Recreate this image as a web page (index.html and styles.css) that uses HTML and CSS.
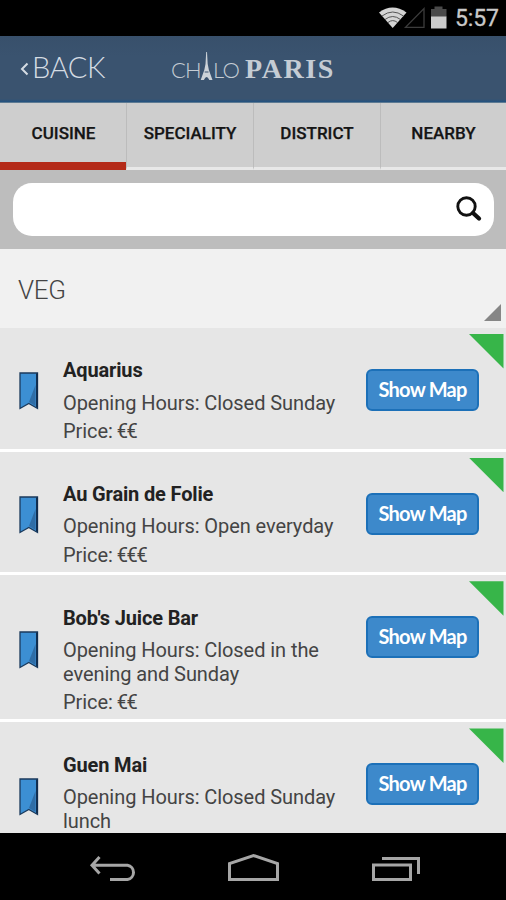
FILE: index.html
```
<!DOCTYPE html>
<html lang="en">
<head>
<meta charset="utf-8">
<title>Chalo Paris</title>
<link rel="stylesheet" href="styles.css">
</head>
<body>
<svg width="0" height="0" class="defs">
  <symbol id="bookmark" viewBox="0 0 20 38">
    <path d="M1 1h17.500v35.500L9.800 31.500 1 36.500z" fill="#3c8fd3"/>
    <path d="M16.500 13v21L10 30z" fill="#2f6da6"/>
    <path d="M1 1h17.500v35.500L9.800 31.500 1 36.500z" fill="none" stroke="#1b3a5c" stroke-width="1.300"/>
    <path d="M17.900 1.500v34" stroke="#0d2747" stroke-width="1.600"/>
  </symbol>
</svg>
<div class="screen">
  <div class="status">
    <svg class="status-icons" width="70" height="24" viewBox="378 5 70 24">
      <path d="M379 12.500Q392.500 2.500 406.500 12.500L392.700 28z" fill="#d4d4d4"/>
      <path d="M382 16q10.700-8 21.500 0M385 19.500q7.700-6 15.500 0M388 22.500q4.700-3.800 9.500 0" fill="none" stroke="#555" stroke-width="1"/>
      <path d="M405.500 27.300h18.500V8.500z" fill="none" stroke="#3c3c3c" stroke-width="1.300"/>
      <path d="M431 17V9h3.500V6.500h8V9h4v8z" fill="#4a4a4a"/>
      <path d="M431 16.500h15.500v12H431z" fill="#cbcbcb"/>
    </svg>
    <span class="clock">5:57</span>
  </div>
  <header class="bar">
    <div class="back"><svg width="9" height="14" viewBox="0 0 9 14"><path d="M7.500 1.500L2 7l5.500 5.500" fill="none" stroke="#d5dce3" stroke-width="2"/></svg><span>BACK</span></div>
    <div class="logo">
      <span class="thin">CH</span>
      <svg class="tower" width="13" height="29" viewBox="0 0 13 29"><path d="M6.200 0h.8l.7 12 1.200 6 3.600 10H9.300q-2.700-6-5.400 0H.700l3.600-10 1.200-6z" fill="#ccd2d8"/><path d="M4.700 20h3.800" stroke="#3a526e"/></svg>
      <span class="thin lo">LO</span>
      <span class="paris">PARIS</span>
    </div>
  </header>
  <nav class="tabs">
    <div class="tab active">CUISINE</div>
    <div class="tab">SPECIALITY</div>
    <div class="tab">DISTRICT</div>
    <div class="tab">NEARBY</div>
  </nav>
  <div class="search">
    <div class="field"><svg width="27" height="27" viewBox="0 0 27 27"><circle cx="10.500" cy="10.500" r="8.700" fill="none" stroke="#111" stroke-width="2.900"/><path d="M17 17l6 5.500" stroke="#111" stroke-width="4.300" stroke-linecap="round"/></svg></div>
  </div>
  <div class="category"><span>VEG</span><svg width="17" height="17" viewBox="0 0 17 17"><path d="M17 0v17H0z" fill="#868686"/></svg></div>
  <main class="list">
    <article class="row">
      <svg class="mark" width="20" height="38"><use href="#bookmark"/></svg>
      <div class="info"><h2>Aquarius</h2><p class="hours">Opening Hours: Closed Sunday</p><p>Price: <span class="euro">€€</span></p></div>
      <div class="map">Show Map</div><i class="corner"></i>
    </article>
    <article class="row">
      <svg class="mark" width="20" height="38"><use href="#bookmark"/></svg>
      <div class="info"><h2>Au Grain de Folie</h2><p class="hours">Opening Hours: Open everyday</p><p>Price: <span class="euro">€€€</span></p></div>
      <div class="map">Show Map</div><i class="corner"></i>
    </article>
    <article class="row">
      <svg class="mark" width="20" height="38"><use href="#bookmark"/></svg>
      <div class="info"><h2>Bob's Juice Bar</h2><p class="hours">Opening Hours: Closed in the<br>evening and Sunday</p><p>Price: <span class="euro">€€</span></p></div>
      <div class="map">Show Map</div><i class="corner"></i>
    </article>
    <article class="row last">
      <svg class="mark" width="20" height="38"><use href="#bookmark"/></svg>
      <div class="info"><h2>Guen Mai</h2><p class="hours">Opening Hours: Closed Sunday<br>lunch</p></div>
      <div class="map">Show Map</div><i class="corner"></i>
    </article>
  </main>
  <footer class="nav">
    <svg width="506" height="67" viewBox="0 833 506 67" fill="none" stroke="#a6a6a6" stroke-width="3">
      <path d="M99.500 857l-7.500 8.300 7.500 8.200M92 865.300h35.500a7.200 7.200 0 0 1 0 14.200H110"/>
      <path d="M229.500 879.500v-16l24-8 24 8v16z"/>
      <path d="M373.500 865h37v14.500h-37zM382 858.500h36.500V874"/>
    </svg>
  </footer>
</div>
</body>
</html>
```
FILE: styles.css
```
* { box-sizing: border-box; margin: 0; padding: 0; }
body { font-family: Roboto, "Liberation Sans", sans-serif; background: #000; }
svg { display: block; flex: none; }
.defs { position: absolute; }
.screen { width: 506px; height: 900px; display: flex; flex-direction: column; overflow: hidden; white-space: nowrap; }
.status { height: 36px; flex: none; background: #000; display: flex; justify-content: flex-end; padding: 5px 8px 0 0; }
.clock { width: 43px; margin-left: 7px; color: #c9c9c9; font-size: 23px; line-height: 28px; letter-spacing: -.1px; -webkit-text-stroke: .3px #c9c9c9; }
.bar { height: 67px; flex: none; display: flex; background: linear-gradient(#38506b, #3a536f 30%, #3a536f 94%, #24527f 98%, #7f929f); }
.back { width: 171px; padding: 14px 0 0 20px; display: flex; gap: 3px; color: #d5dce3; }
.back svg { margin-top: 12px; }
.back span { font: 300 29px/34px Lato, sans-serif; letter-spacing: -.4px; }
.logo { display: flex; color: #c5ccd4; }
.thin { font: 300 22px/26px Lato, sans-serif; margin-top: 21px; width: 29px; letter-spacing: -.8px; }
.lo { width: 29px; }
.tower { margin-top: 16px; }
.paris { font: bold 28px/32px "Liberation Serif", serif; margin: 17px 0 0 3px; letter-spacing: 1.600px; }
.tabs { height: 67px; flex: none; display: grid; grid-template-columns: 126px 127px 127px 126px; background: #cecece; }
.tab { border-bottom: 3px solid #e8e8e8; border-left: 1px solid #bcbcbc; text-align: center; font-size: 17px; font-weight: 500; line-height: 20px; padding-top: 20px; color: #151515; -webkit-text-stroke: .25px #151515; }
.active { border-bottom: 8px solid #b42a18; border-left: 0; padding-left: 1px; }
.search { height: 79px; flex: none; background: #bdbdbd; padding: 13px 12px 0 13px; }
.field { height: 53px; background: #fff; border-radius: 19px; display: flex; justify-content: flex-end; padding: 13px 11px 0 0; }
.category { height: 79px; flex: none; background: #f1f1f1; display: flex; justify-content: space-between; padding: 25px 5px 0 18px; font-size: 26px; font-weight: 300; line-height: 32px; letter-spacing: -.3px; color: #444; }
.category svg { margin-top: 30px; }
.list { flex: 1; min-height: 0; overflow: hidden; background: #e6e6e6; }
.row { position: relative; display: flex; padding: 31.200px 0 5.400px; border-bottom: 3px solid #fff; }
.mark { align-self: center; margin: -20px 0 0 19px; }
.info { width: 303px; margin-left: 24px; font-size: 20px; line-height: 23.400px; letter-spacing: -.07px; color: #444; }
.info h2 { font-size: 20px; font-weight: 700; line-height: 23.400px; letter-spacing: -.15px; color: #222; margin-bottom: 9.200px; }
.hours { margin-bottom: 4.700px; }
.euro { letter-spacing: -1.300px; margin-left: -1px; }
.last { height: 147px; }
.map { width: 113px; height: 42px; margin-top: 9.800px; border: 2px solid #1c70b8; border-radius: 6px; background: #3d89cb; color: #fff; text-align: center; font: 700 20px/36px Lato, sans-serif; letter-spacing: -.75px; }
.corner { position: absolute; right: 2.500px; top: 6px; width: 34.500px; height: 34.500px; background: #37b549; clip-path: polygon(0 0, 100% 0, 100% 100%); }
.nav { height: 67px; flex: none; background: #000; }
```
